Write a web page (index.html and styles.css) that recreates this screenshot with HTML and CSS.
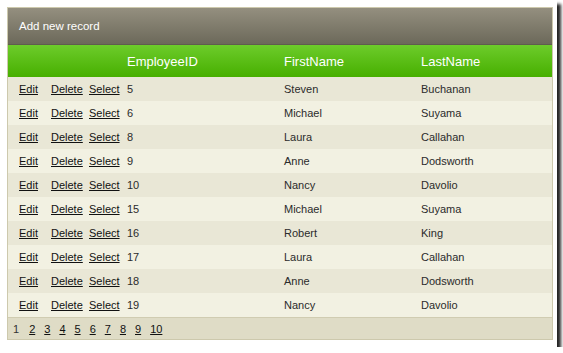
FILE: index.html
```html
<!DOCTYPE html>
<html>
<head>
<meta charset="utf-8">
<link rel="stylesheet" href="styles.css">
</head>
<body>
<div class="frame">
  <div class="grid">
    <div class="cmd">Add new record</div>
    <table class="tbl">
      <colgroup>
        <col class="c-edit"><col class="c-del"><col class="c-sel"><col class="c-id"><col class="c-fn"><col class="c-ln">
      </colgroup>
      <thead>
        <tr class="head">
          <th></th><th></th><th></th><th>EmployeeID</th><th>FirstName</th><th>LastName</th>
        </tr>
      </thead>
      <tbody>
        <tr class="odd"><td><a href="#">Edit</a></td><td><a href="#">Delete</a></td><td><a href="#">Select</a></td><td>5</td><td>Steven</td><td>Buchanan</td></tr>
        <tr class="even"><td><a href="#">Edit</a></td><td><a href="#">Delete</a></td><td><a href="#">Select</a></td><td>6</td><td>Michael</td><td>Suyama</td></tr>
        <tr class="odd"><td><a href="#">Edit</a></td><td><a href="#">Delete</a></td><td><a href="#">Select</a></td><td>8</td><td>Laura</td><td>Callahan</td></tr>
        <tr class="even"><td><a href="#">Edit</a></td><td><a href="#">Delete</a></td><td><a href="#">Select</a></td><td>9</td><td>Anne</td><td>Dodsworth</td></tr>
        <tr class="odd"><td><a href="#">Edit</a></td><td><a href="#">Delete</a></td><td><a href="#">Select</a></td><td>10</td><td>Nancy</td><td>Davolio</td></tr>
        <tr class="even"><td><a href="#">Edit</a></td><td><a href="#">Delete</a></td><td><a href="#">Select</a></td><td>15</td><td>Michael</td><td>Suyama</td></tr>
        <tr class="odd"><td><a href="#">Edit</a></td><td><a href="#">Delete</a></td><td><a href="#">Select</a></td><td>16</td><td>Robert</td><td>King</td></tr>
        <tr class="even"><td><a href="#">Edit</a></td><td><a href="#">Delete</a></td><td><a href="#">Select</a></td><td>17</td><td>Laura</td><td>Callahan</td></tr>
        <tr class="odd"><td><a href="#">Edit</a></td><td><a href="#">Delete</a></td><td><a href="#">Select</a></td><td>18</td><td>Anne</td><td>Dodsworth</td></tr>
        <tr class="even"><td><a href="#">Edit</a></td><td><a href="#">Delete</a></td><td><a href="#">Select</a></td><td>19</td><td>Nancy</td><td>Davolio</td></tr>
      </tbody>
    </table>
    <div class="pager">
      <span class="cur">1</span>
      <a href="#">2</a><a href="#">3</a><a href="#">4</a><a href="#">5</a><a href="#">6</a><a href="#">7</a><a href="#">8</a><a href="#">9</a><a href="#">10</a>
    </div>
  </div>
</div>
</body>
</html>
```
FILE: styles.css
```css
html, body {
  margin: 0;
  padding: 0;
  background: #ffffff;
}
body {
  font-family: "Liberation Sans", Arial, sans-serif;
  font-size: 11px;
  color: #2b2b2b;
}
.frame {
  width: 557px;
  height: 347px;
  box-sizing: border-box;
  padding: 7px 0 0 7px;
  background: #ffffff;
  box-shadow: 4px 4px 3px rgba(0, 0, 0, 0.85);
}
.grid {
  width: 546px;
  border: 1px solid #cdc9ad;
  box-sizing: border-box;
}
.cmd {
  height: 37px;
  box-sizing: border-box;
  padding: 0 0 0 11px;
  line-height: 37px;
  color: #ffffff;
  font-size: 11.5px;
  background: linear-gradient(#948f7f, #6c695a);
  border-bottom: 1px solid #5f5c4e;
}
.tbl {
  width: 100%;
  border-collapse: collapse;
  table-layout: fixed;
}
.c-edit { width: 43px; }
.c-del { width: 38px; }
.c-sel { width: 38px; }
.c-id { width: 157px; }
.c-fn { width: 137px; }
.tbl th {
  height: 32px;
  padding: 0;
  text-align: left;
  font-weight: normal;
  font-size: 13px;
  color: #ffffff;
  background: linear-gradient(#6dcc2b, #47af00);
}
.tbl th:first-child, .tbl td:first-child {
  padding-left: 11px;
}
.tbl td {
  height: 24px;
  padding: 0;
  white-space: nowrap;
}
.odd td { background: #e9e7d6; }
.even td { background: #f2f1e2; }
.tbl a {
  color: #111111;
  text-decoration: underline;
}
.pager {
  height: 22px;
  box-sizing: border-box;
  border-top: 1px solid #d0ccb1;
  background: #dfdcc6;
  padding: 0 0 0 5px;
  display: flex;
  align-items: center;
  gap: 9px;
  font-size: 11px;
}
.pager a {
  color: #111111;
  text-decoration: underline;
}
.pager .cur {
  color: #333333;
  margin-right: 1px;
}
```
